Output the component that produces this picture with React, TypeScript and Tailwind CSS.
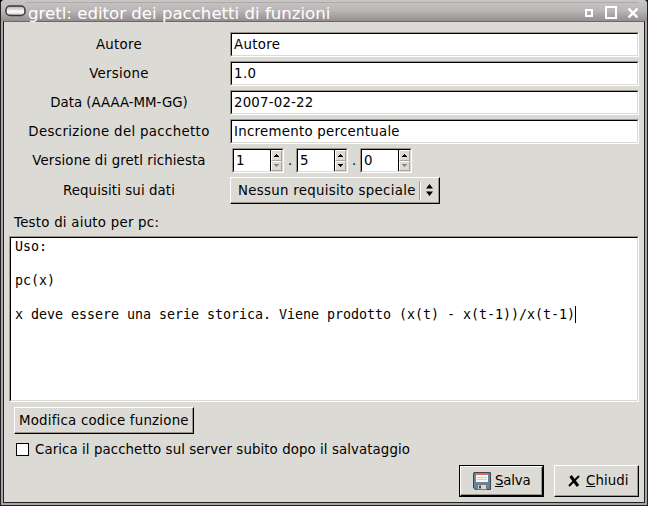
import type { ReactNode } from "react";

const sunken =
  "border-t border-l border-t-[#9c968c] border-l-[#9c968c] border-b border-r border-b-white border-r-white";
const sunkenInner =
  "border-t border-l border-t-black border-l-black border-b border-r border-b-[#dcdad5] border-r-[#dcdad5] bg-white";

function Entry({ children }: { children: ReactNode }) {
  return (
    <div className={`h-[25px] w-[409px] ${sunken}`}>
      <div className={`flex h-full items-center pl-[2px] ${sunkenInner}`}>{children}</div>
    </div>
  );
}

function Row({ label, tracking = "", children }: { label: string; tracking?: string; children: ReactNode }) {
  return (
    <div className="flex">
      <div className="mr-[6px] flex w-[210px] items-center justify-center">
        <span className={tracking}>{label}</span>
      </div>
      {children}
    </div>
  );
}

function SpinButton({ up, disabled }: { up?: boolean; disabled?: boolean }) {
  return (
    <div className="flex flex-1 items-center justify-center border border-t-white border-l-white border-r-[#a8a49c] border-b-[#a8a49c] bg-[#dcdad5]">
      <svg width="5" height="3" viewBox="0 0 5 3" shapeRendering="crispEdges" fill={disabled ? "#8c8880" : "#000"}>
        {up ? <path d="M2 0h1v1h1v1h1v1H0V2h1V1h1z" /> : <path d="M0 0h5v1H4v1H3v1H2V2H1V1H0z" />}
      </svg>
    </div>
  );
}

function Spin({ value, min }: { value: string; min?: boolean }) {
  return (
    <div className={`h-[25px] w-[52px] ${sunken}`}>
      <div className={`flex h-full ${sunkenInner}`}>
        <div className="flex flex-1 items-center border-r border-black pl-[2px]">{value}</div>
        <div className="flex w-[11px] flex-col">
          <SpinButton up />
          <SpinButton disabled={min} />
        </div>
      </div>
    </div>
  );
}

const raised = "border border-t-white border-l-white border-b-black border-r-black";
const raisedInner = "border-b border-r border-b-[#9c968c] border-r-[#9c968c] bg-[#dcdad5]";

export default function App() {
  return (
    <div className="h-[506px] w-[648px] overflow-hidden bg-black font-['DejaVu_Sans','Bitstream_Vera_Sans',sans-serif] text-[13.33px] leading-[17px] whitespace-nowrap text-black">
      <div className="h-full rounded-t-[4px] border-x border-b border-[#242021] bg-[#a9a5a6]">
        <div className="flex h-[21px] items-center rounded-t-[4px] bg-linear-to-b from-[#c8c6c5] via-[#bab6b6] to-[#958e8f] pr-[9px] pl-[4px]">
          <svg className="mt-px" width="21" height="12" viewBox="0 0 21 12">
            <defs>
              <linearGradient id="pill" x1="0" y1="0" x2="0" y2="1">
                <stop offset="0" stopColor="#aaa" />
                <stop offset="0.6" stopColor="#fff" />
                <stop offset="1" stopColor="#bbb" />
              </linearGradient>
            </defs>
            <rect x="1" y="1" width="19" height="9.5" rx="4" fill="url(#pill)" stroke="#3a3737" strokeWidth="1.5" />
          </svg>
          <div className="flex h-full flex-1 items-center border-t-2 border-transparent">
            <div className="flex h-full flex-1 items-center border-t border-[#aeaaa9]">
              <span className="relative top-px ml-[2px] text-[16.6px] text-white">
                gretl: editor dei pacchetti di funzioni
              </span>
              <div className="ml-auto flex items-end">
                <div className="mb-[2px] size-[8px] border-2 border-white" />
                <div className="ml-[12px] h-[13px] w-[12px] border-2 border-white" />
                <svg className="mb-px ml-[11px]" width="10" height="10" viewBox="0 0 10 10" stroke="#fff" strokeWidth="2.4">
                  <path d="M0.5 0.5L9.5 9.5M9.5 0.5L0.5 9.5" />
                </svg>
              </div>
            </div>
          </div>
        </div>
        <div className="mx-[2px] h-[482px] border border-t-[#6c6768] border-r-[#242021] border-b-[#242021] border-l-[#242021] bg-[#dcdad5]">
          <div className="flex flex-col gap-[4px] pt-[10px] pl-[10px]">
            <Row label="Autore" tracking="tracking-[0.3px]">
              <Entry><span className="tracking-[0.3px]">Autore</span></Entry>
            </Row>
            <Row label="Versione" tracking="tracking-[0.3px]">
              <Entry><span className="tracking-[0.4px]">1.0</span></Entry>
            </Row>
            <Row label="Data (AAAA-MM-GG)">
              <Entry><span className="tracking-[0.2px]">2007-02-22</span></Entry>
            </Row>
            <Row label="Descrizione del pacchetto" tracking="tracking-[0.34px]">
              <Entry><span className="tracking-[0.27px]">Incremento percentuale</span></Entry>
            </Row>
            <Row label="Versione di gretl richiesta" tracking="tracking-[0.12px]">
              <div className="flex items-center pl-[2px]">
                <Spin value="1" min />
                <span className="w-[12px] text-center">.</span>
                <Spin value="5" />
                <span className="w-[12px] text-center">.</span>
                <Spin value="0" min />
              </div>
            </Row>
            <Row label="Requisiti sui dati" tracking="tracking-[0.1px]">
              <div className={`h-[27px] w-[210px] ${raised}`}>
                <div className={`flex h-full items-center pl-[7px] ${raisedInner}`}>
                  <span className="tracking-[0.3px]">Nessun requisito speciale</span>
                  <div className="ml-auto h-[19px] w-[2px] border-r border-l border-r-white border-l-[#9c968c]" />
                  <svg className="mr-[5px] ml-[5px]" width="7" height="12" viewBox="0 0 7 12">
                    <path d="M3.5 0L7 4.5H0zM3.5 12L7 7.5H0z" />
                  </svg>
                </div>
              </div>
            </Row>
          </div>
          <div className="mt-[10px] ml-[10px] tracking-[0.25px]">Testo di aiuto per pc:</div>
          <div className={`mt-[5px] ml-[5px] h-[166px] w-[630px] ${sunken}`}>
            <div
              className={`h-full pl-[4px] font-['DejaVu_Sans_Mono','Bitstream_Vera_Sans_Mono',monospace] tracking-[-0.023px] whitespace-pre ${sunkenInner}`}
            >
              <div>Uso:</div>
              <div className="mt-[17px]">pc(x)</div>
              <div className="mt-[17px] flex">
                x deve essere una serie storica. Viene prodotto (x(t) - x(t-1))/x(t-1)
                <div className="h-[17px] w-px bg-black" />
              </div>
            </div>
          </div>
          <div className={`mt-[5px] ml-[10px] h-[27px] w-[180px] ${raised}`}>
            <div className={`flex h-full items-center pl-[4px] ${raisedInner}`}>
              <span className="tracking-[0.22px]">Modifica codice funzione</span>
            </div>
          </div>
          <div className="mt-[7px] ml-[12px] flex h-[17px] items-center">
            <div className="size-[13px] border border-black bg-white" />
            <span className="ml-[6px] tracking-[0.09px]">Carica il pacchetto sul server subito dopo il salvataggio</span>
          </div>
          <div className="mt-[7px] mr-[5px] flex justify-end gap-[10px]">
            <div className="h-[32px] w-[85px] border border-black">
              <div className={`h-full ${raised}`}>
                <div className={`flex h-full items-center pl-[12px] ${raisedInner}`}>
                  <svg width="18" height="18" viewBox="0 0 18 18">
                    <path d="M1 .5h16a.5.5 0 0 1 .5.5v16.5h-15L.5 16V1z" fill="#64839f" stroke="#3c4650" />
                    <rect x="3" y="1" width="12" height="9" fill="#f7f7f7" />
                    <rect x="3" y="1" width="12" height="2" fill="#e0685c" />
                    <path d="M4 5.5h10M4 7.5h10" stroke="#ccc" />
                    <rect x="4.5" y="12.5" width="9" height="5" fill="#d8d8d4" stroke="#777" />
                    <rect x="6" y="13.5" width="2" height="3" fill="#444" />
                  </svg>
                  <span className="ml-[4px] tracking-[-0.2px]"><span className="underline">S</span>alva</span>
                </div>
              </div>
            </div>
            <div className={`h-[32px] w-[85px] ${raised}`}>
              <div className={`flex h-full items-center pl-[13px] ${raisedInner}`}>
                <svg width="12" height="12" viewBox="0 0 12 12" fill="none" stroke="#000">
                  <path d="M2.5 1L10 11" strokeWidth="3" />
                  <path d="M11 1L1 11" strokeWidth="2" />
                </svg>
                <span className="ml-[6px] tracking-[0.1px]"><span className="underline">C</span>hiudi</span>
              </div>
            </div>
          </div>
        </div>
      </div>
    </div>
  );
}
